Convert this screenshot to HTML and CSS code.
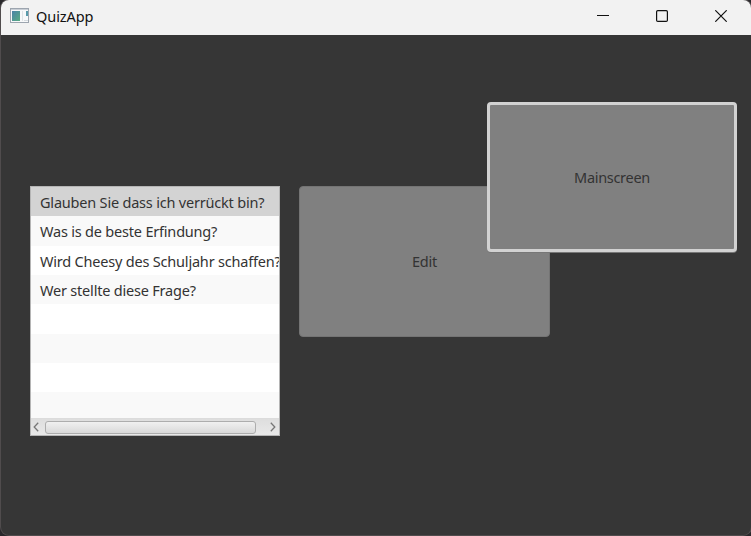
FILE: index.html
```
<!DOCTYPE html>
<html lang="de">
<head>
<meta charset="utf-8">
<title>QuizApp</title>
<link rel="stylesheet" href="styles.css">
</head>
<body>
<div class="window">
  <header class="titlebar">
    <svg class="app-icon" width="20" height="16" viewBox="0 0 20 16">
      <defs><linearGradient id="g" x1="0" y1="0" x2="1" y2="1"><stop offset="0" stop-color="#4c83a8"/><stop offset="1" stop-color="#58ac82"/></linearGradient></defs>
      <rect x=".5" y=".5" width="18" height="14" fill="#f8f9fa" stroke="#9da5af"/>
      <path d="M1 1.5h17" stroke="#c8ced5"/>
      <rect x="2" y="3" width="8" height="10" fill="url(#g)"/>
      <path d="M12.5 3v10" stroke="#dfe3e6"/>
      <rect x="16" y="3" width="2" height="5" fill="#599bab"/>
      <path d="M14 12.5h4" stroke="#d7dce0"/>
    </svg>
    <span class="title">QuizApp</span>
    <div class="controls">
      <svg width="12" height="12" viewBox="0 0 12 12"><path d="M0 5.5h12"/></svg>
      <svg width="12" height="12" viewBox="0 0 12 12"><rect x=".6" y=".6" width="10.8" height="10.8" rx="1.2"/></svg>
      <svg width="12" height="12" viewBox="0 0 12 12"><path d="M.3.3l11.4 11.4M11.7.3L.3 11.7"/></svg>
    </div>
  </header>
  <main class="scene">
    <div class="list">
      <ul class="rows">
        <li class="selected">Glauben Sie dass ich verrückt bin?</li>
        <li>Was is de beste Erfindung?</li>
        <li>Wird Cheesy des Schuljahr schaffen?</li>
        <li>Wer stellte diese Frage?</li>
        <li></li><li></li><li></li><li></li>
      </ul>
      <div class="scrollbar">
        <svg width="6" height="10" viewBox="0 0 6 10"><path d="M5.2.8L1.2 5l4 4.2"/></svg>
        <div class="track"><div class="thumb"></div></div>
        <svg width="6" height="10" viewBox="0 0 6 10"><path d="M.8.8l4 4.2-4 4.2"/></svg>
      </div>
    </div>
    <button class="btn edit">Edit</button>
    <button class="btn mainscreen">Mainscreen</button>
  </main>
</div>
</body>
</html>
```
FILE: styles.css
```
* { box-sizing: border-box; }
body {
  margin: 0;
  width: 751px;
  height: 536px;
  overflow: hidden;
  background: #29282b;
  font: 14.5px/20px "Noto Sans", "Open Sans", sans-serif;
}
.window {
  position: relative;
  width: 750px;
  height: 535px;
  margin-left: 1px;
  border-radius: 8px;
  overflow: hidden;
  background: #363636;
  box-shadow: 0 0 0 1px #504c4d;
}
.titlebar {
  display: flex;
  align-items: center;
  height: 35px;
  padding: 0 24px 3px 9px;
  background: #f2f2f2;
  color: #111;
}
.title { margin-left: 6px; letter-spacing: -0.08px; }
.controls { display: flex; gap: 47px; margin-left: auto; }
.controls svg { fill: none; stroke: #111; stroke-width: 1.2; }
.scene { display: flex; gap: 19px; padding: 151px 0 0 29px; }
.list {
  display: flex;
  flex-direction: column;
  width: 250px;
  height: 250px;
  border: 1px solid #b5b5b5;
  background: #fff;
}
.rows {
  flex: 1;
  min-height: 0;
  margin: 0;
  padding: 0;
  overflow: hidden;
  list-style: none;
}
.rows li {
  height: 29.33px;
  padding: 5px 0 0 9px;
  white-space: nowrap;
  color: #333;
  letter-spacing: -0.2px;
}
.rows li:nth-child(even) { background: #f9f9f9; }
.rows .selected { background: #d3d3d3; }
.scrollbar {
  display: flex;
  align-items: center;
  height: 17px;
  padding: 0 3px 0 2px;
  border-top: 1px solid #dcdcdc;
  background: linear-gradient(#dedede, #e9e9e9);
}
.scrollbar svg { fill: none; stroke: #777; stroke-width: 1.3; }
.track { flex: 1; padding: 0 14px 0 6px; }
.thumb {
  height: 13px;
  border: 1px solid #adadad;
  border-radius: 3px;
  background: linear-gradient(#f0f0f0, #d9d9d9);
}
.btn {
  width: 251px;
  height: 151px;
  padding: 0 0 2px;
  border: 1px solid #747474;
  border-radius: 4px;
  background: #808080;
  color: #333;
  font: inherit;
  letter-spacing: -0.3px;
}
.mainscreen {
  position: absolute;
  left: 486px;
  top: 102px;
  width: 250px;
  height: 150px;
  padding-bottom: 1px;
  border: 3px solid #d2d2d2;
  box-shadow: 0 1px 0 #777;
}
```
